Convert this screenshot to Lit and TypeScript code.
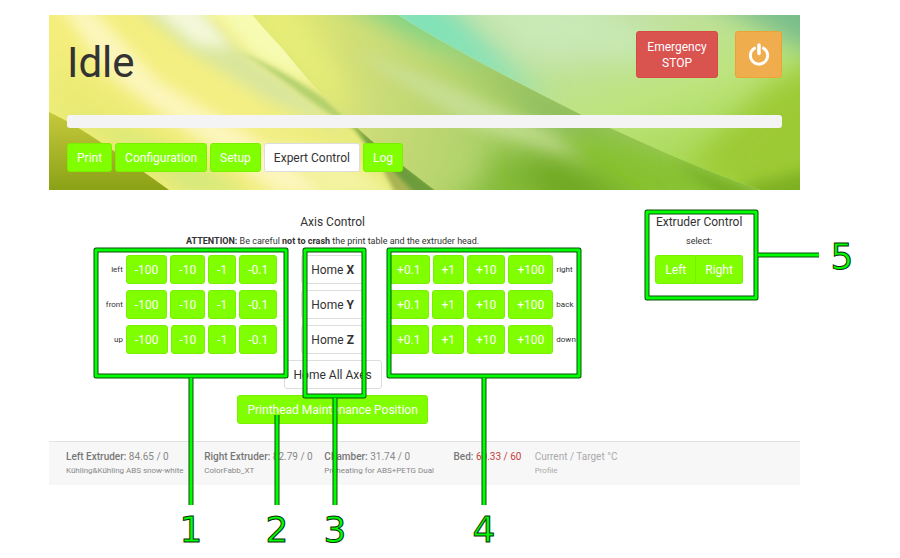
import { LitElement, html, css, svg } from "lit";
import { customElement, state } from "lit/decorators.js";

interface Axis {
  name: string;
  negative: string;
  positive: string;
}

interface Reading {
  label: string;
  value: string;
  profile: string;
  hot?: boolean;
}

const TABS = ["Print", "Configuration", "Setup", "Expert Control", "Log"];

const AXES: Axis[] = [
  { name: "X", negative: "left", positive: "right" },
  { name: "Y", negative: "front", positive: "back" },
  { name: "Z", negative: "up", positive: "down" },
];

const NEGATIVE_STEPS = ["-100", "-10", "-1", "-0.1"];
const POSITIVE_STEPS = ["+0.1", "+1", "+10", "+100"];

const READINGS: Reading[] = [
  { label: "Left Extruder:", value: "84.65 / 0", profile: "Kühling&Kühling ABS snow-white" },
  { label: "Right Extruder:", value: "82.79 / 0", profile: "ColorFabb_XT" },
  { label: "Chamber:", value: "31.74 / 0", profile: "Preheating for ABS+PETG Dual" },
  { label: "Bed:", value: "60.33 / 60", profile: "", hot: true },
];

const backdrop = svg`
  <svg class="backdrop" viewBox="0 0 751 175" preserveAspectRatio="none" aria-hidden="true">
    <defs>
      <linearGradient id="left" x1="0" y1="0" x2="1" y2="0">
        <stop offset="0" stop-color="#f4ee7c" />
        <stop offset="0.5" stop-color="#f3ef84" />
        <stop offset="1" stop-color="#dfe874" />
      </linearGradient>
      <linearGradient id="middle" gradientUnits="userSpaceOnUse" x1="220" y1="60" x2="480" y2="120">
        <stop offset="0" stop-color="#dfe672" />
        <stop offset="0.4" stop-color="#ccdc78" />
        <stop offset="1" stop-color="#a4ce66" />
      </linearGradient>
      <linearGradient id="right" gradientUnits="userSpaceOnUse" x1="560" y1="0" x2="620" y2="175">
        <stop offset="0" stop-color="#c0e0a6" />
        <stop offset="0.5" stop-color="#bde47e" />
        <stop offset="1" stop-color="#a4d64c" />
      </linearGradient>
      <linearGradient id="olive" x1="0" y1="0" x2="0" y2="1">
        <stop offset="0" stop-color="#c6c93c" />
        <stop offset="1" stop-color="#8ba216" />
      </linearGradient>
      <filter id="soft" x="-30%" y="-50%" width="160%" height="200%"><feGaussianBlur stdDeviation="14" /></filter>
      <filter id="fine" x="-20%" y="-40%" width="140%" height="180%"><feGaussianBlur stdDeviation="7" /></filter>
      <filter id="thin" x="-20%" y="-30%" width="140%" height="160%"><feGaussianBlur stdDeviation="2" /></filter>
      <clipPath id="leftClip"><path d="M0 0H204C216 16 228 26 239 40C254 58 264 70 278 83C290 95 298 104 311 115C330 133 360 155 386 175H0Z" /></clipPath>
      <clipPath id="middleClip"><path d="M204 0H349C410 38 470 68 531 99C590 126 640 150 712 175H386C360 155 330 133 311 115C298 104 290 95 278 83C264 70 254 58 239 40C228 26 216 16 204 0Z" /></clipPath>
      <clipPath id="rightClip"><path d="M349 0H751V175H712C640 150 590 126 531 99C470 68 410 38 349 0Z" /></clipPath>
    </defs>
    <rect width="751" height="175" fill="#c5dd75" />
    <g clip-path="url(#leftClip)">
      <rect width="400" height="175" fill="url(#left)" />
      <path d="M10 -10H40L110 66L200 120L290 180H230L120 106L60 60Z" fill="#fcf6bc" filter="url(#fine)" />
      <path d="M0 40L60 80L150 140L210 180H100L0 100Z" fill="#e9ea74" filter="url(#soft)" />
      <path d="M84 -10H140L190 32L262 84L300 120L220 86L140 36Z" fill="#d9e69c" filter="url(#fine)" />
      <path d="M88 -20H140L184 34L146 30Z" fill="#f4f8da" filter="url(#fine)" />
      <path d="M150 -20H214L268 74L204 40Z" fill="#f6fbb2" filter="url(#fine)" />
      <path d="M190 36C225 52 250 66 276 84L311 116C280 104 240 66 190 36Z" fill="#a6ca66" opacity="0.8" filter="url(#thin)" />
      <path d="M220 124L290 140L350 180H280Z" fill="#f4f3a0" filter="url(#fine)" />
      <path d="M300 106L400 184H362L318 130Z" fill="#6c9c3a" filter="url(#thin)" />
      <path d="M326 138L366 178H346Z" fill="#a8b452" filter="url(#thin)" />
      <path d="M0 92L60 118L140 180H200L130 136L40 104Z" fill="#d8ea7c" filter="url(#fine)" />
      <path d="M0 97C34 113 74 142 120 175H0Z" fill="url(#olive)" />
    </g>
    <g clip-path="url(#middleClip)">
      <rect x="190" width="540" height="175" fill="url(#middle)" />
      <path d="M190 -20H236L290 60L310 110L260 70Z" fill="#e8ee78" filter="url(#soft)" />
      <path d="M270 -30H349L450 54L370 24Z" fill="#74d288" filter="url(#soft)" />
      <path d="M400 30L531 99L640 156L520 120Z" fill="#86b45c" filter="url(#soft)" />
      <path d="M300 34L400 70L510 124L580 170L420 110Z" fill="#cbe2a0" opacity="0.7" filter="url(#fine)" />
      <path d="M520 112L620 136L770 200H540Z" fill="#88c232" filter="url(#soft)" />
      <path d="M440 130L600 200H390L440 164Z" fill="#84ba38" filter="url(#soft)" />
      <path d="M460 140L520 144L600 200H510Z" fill="#6fa820" filter="url(#soft)" />
      <path d="M620 144L740 190H680Z" fill="#74ae22" filter="url(#fine)" />
    </g>
    <g clip-path="url(#rightClip)">
      <rect x="340" width="411" height="175" fill="url(#right)" />
      <path d="M330 -20H390L450 40L500 90L340 20Z" fill="#80e2b8" filter="url(#soft)" />
      <path d="M410 -20L520 -20L640 40L480 44Z" fill="#c9e9b6" filter="url(#soft)" />
      <path d="M640 -30H790V54L720 16Z" fill="#78bd8c" filter="url(#soft)" />
      <path d="M720 70L800 30V200H740L640 150Z" fill="#9cca34" filter="url(#soft)" />
      <path d="M690 172L780 150V200H720Z" fill="#7eb024" filter="url(#fine)" />
    </g>
  </svg>
`;

@customElement("app-root")
export class AppRoot extends LitElement {
  @state() private tab = "Expert Control";

  static styles = css`
    :host {
      display: block;
      position: relative;
      background: #fff;
      color: #333;
      font: 12px/18px Roboto, "Liberation Sans", sans-serif;
    }
    * {
      box-sizing: border-box;
    }
    .panel {
      margin: 0 100px 0 49px;
      padding-top: 15px;
    }
    .header {
      position: relative;
      padding: 16px 18px 18px;
    }
    .backdrop {
      position: absolute;
      inset: 0;
      width: 100%;
      height: 100%;
    }
    .top,
    .progress,
    .tabs {
      position: relative;
    }
    .top {
      display: flex;
      align-items: flex-start;
      gap: 17px;
      height: 84px;
    }
    .title {
      margin: 4px auto 0 0;
      font-size: 42px;
      line-height: 56px;
      font-weight: 400;
    }
    .progress {
      height: 13px;
      border-radius: 3px;
      background: #f4f4f4;
    }
    .tabs {
      display: flex;
      gap: 3px;
      margin-top: 15px;
    }
    button {
      height: 29px;
      margin: 0;
      padding: 0 9px;
      border: 1px solid #78f000;
      border-radius: 3px;
      background: #80ff00;
      color: #fff;
      font: inherit;
      white-space: nowrap;
      cursor: pointer;
    }
    .plain,
    .tab[aria-current="page"] {
      background: #fff;
      border-color: #ddd;
      color: #333;
    }
    .stop,
    .power {
      height: 47px;
      line-height: 16px;
    }
    .stop {
      width: 82px;
      background: #d9534f;
      border-color: #d64944;
    }
    .power {
      width: 47px;
      display: grid;
      place-items: center;
      background: #f0ad4e;
      border-color: #eea236;
    }
    .power-icon {
      width: 24px;
      height: 24px;
    }
    .main {
      display: grid;
      grid-template-columns: 532fr 202fr;
      padding: 22px 0 17px 18px;
    }
    .section {
      display: flex;
      flex-direction: column;
      align-items: center;
    }
    .heading {
      margin: 0;
      font-size: 12px;
      line-height: 20px;
      font-weight: 400;
    }
    .note {
      margin: 0 0 5px;
      font-size: 9px;
      line-height: 18px;
    }
    .rows {
      width: 100%;
      display: flex;
      flex-direction: column;
      align-items: center;
      gap: 6px;
    }
    .axis {
      width: 100%;
      display: grid;
      grid-template-columns: 1fr auto 1fr;
      gap: 24px;
    }
    .steps {
      display: flex;
      align-items: center;
      gap: 3px;
    }
    .steps button {
      padding: 0 8px;
    }
    .negative {
      justify-content: flex-end;
    }
    .direction {
      font-size: 8px;
    }
    .pair {
      display: flex;
    }
    .pair button:first-child {
      border-radius: 3px 0 0 3px;
    }
    .pair button:last-child {
      border-left: 0;
      border-radius: 0 3px 3px 0;
    }
    .footer {
      display: grid;
      grid-template-columns: 138fr 120fr 129fr 81fr 248fr;
      padding: 7px 17px 8px;
      border-top: 1px solid #e2e2e2;
      background: #f7f7f7;
      color: #888;
      font-size: 10px;
      line-height: 16px;
      white-space: nowrap;
    }
    .label {
      color: #777;
      font-weight: 500;
    }
    .hot {
      color: #c9403a;
    }
    .profile {
      font-size: 8px;
      line-height: 12px;
    }
    .legend {
      color: #aaa;
    }
    .callouts {
      position: absolute;
      top: 0;
      left: 0;
      width: 900px;
      height: 558px;
      pointer-events: none;
    }
    .edge,
    .core {
      fill: none;
      stroke-linejoin: round;
    }
    .edge {
      stroke: #0c4c0c;
      stroke-width: 5px;
    }
    .core {
      stroke: #00ff00;
      stroke-width: 3px;
    }
    .number {
      font: 36px "DejaVu Sans", sans-serif;
      text-anchor: middle;
      fill: #00ff00;
      stroke: #0a300a;
      stroke-width: 1px;
    }
    .space {
      height: 73px;
    }
  `;

  private step(value: string, axis: Axis) {
    return html`<button type="button" aria-label="${axis.name} ${value}">${value}</button>`;
  }

  private axisRow(axis: Axis) {
    return html`
      <div class="axis">
        <div class="steps negative">
          <span class="direction">${axis.negative}</span>
          ${NEGATIVE_STEPS.map((s) => this.step(s, axis))}
        </div>
        <button type="button" class="plain">Home <b>${axis.name}</b></button>
        <div class="steps">
          ${POSITIVE_STEPS.map((s) => this.step(s, axis))}
          <span class="direction">${axis.positive}</span>
        </div>
      </div>
    `;
  }

  private callouts() {
    const lines =
      "M96 250H286V376H96ZM191 378V505M277 415V505M305 250H364V396H305ZM335 398V505M389 250H579V376H389ZM484 378V505M647 212H756V298H647ZM758 255H819";
    const numbers: [string, number, number][] = [
      ["1", 191, 542],
      ["2", 277, 542],
      ["3", 335, 542],
      ["4", 484, 542],
      ["5", 842, 269],
    ];
    return html`
      <svg class="callouts" viewBox="0 0 900 558">
        <path class="edge" d=${lines} />
        <path class="core" d=${lines} />
        ${numbers.map(([n, x, y]) => svg`<text class="number" x=${x} y=${y}>${n}</text>`)}
      </svg>
    `;
  }

  render() {
    return html`
      <div class="panel">
        <header class="header">
          ${backdrop}
          <div class="top">
            <h1 class="title">Idle</h1>
            <button type="button" class="stop">Emergency<br />STOP</button>
            <button type="button" class="power" aria-label="Power">
              <svg class="power-icon" viewBox="0 0 24 24" fill="none" stroke="#fff" stroke-width="3">
                <path d="M7.500 5.200A8.600 8.600 0 1 0 16.500 5.200" stroke-linecap="round" />
                <path d="M12 2V10.500" stroke-linecap="round" stroke-width="3.500" />
              </svg>
            </button>
          </div>
          <div class="progress" role="progressbar" aria-label="Print progress" aria-valuenow="0"></div>
          <nav class="tabs">
            ${TABS.map(
              (t) => html`<button
                type="button"
                class="tab"
                aria-current=${t === this.tab ? "page" : "false"}
                @click=${() => (this.tab = t)}
              >${t}</button>`,
            )}
          </nav>
        </header>
        <main class="main">
          <section class="section">
            <h2 class="heading">Axis Control</h2>
            <p class="note">
              <b>ATTENTION:</b> Be careful <b>not to crash</b> the print table and the extruder head.
            </p>
            <div class="rows">
              ${AXES.map((a) => this.axisRow(a))}
              <button type="button" class="plain">Home All Axes</button>
              <button type="button">Printhead Maintenance Position</button>
            </div>
          </section>
          <section class="section">
            <h2 class="heading">Extruder Control</h2>
            <p class="note">select:</p>
            <div class="pair">
              <button type="button">Left</button>
              <button type="button">Right</button>
            </div>
          </section>
        </main>
        <footer class="footer">
          ${READINGS.map(
            (r) => html`<div>
              <div><span class="label">${r.label}</span> <span class=${r.hot ? "hot" : ""}>${r.value}</span></div>
              <div class="profile">${r.profile}</div>
            </div>`,
          )}
          <div class="legend">
            <div>Current / Target °C</div>
            <div class="profile">Profile</div>
          </div>
        </footer>
      </div>
      <div class="space"></div>
      ${this.callouts()}
    `;
  }
}
